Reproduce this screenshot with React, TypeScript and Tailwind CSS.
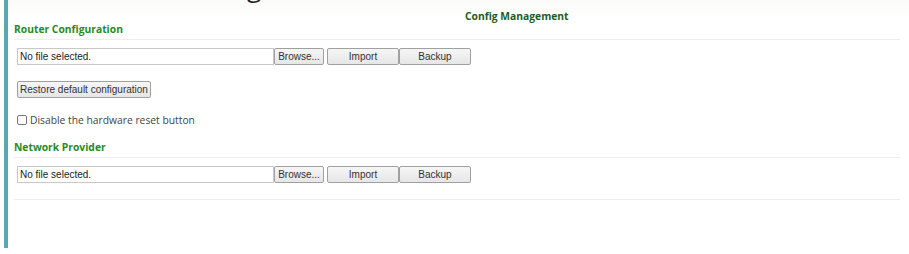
import React from "react";

const btn =
  "h-[17px] border border-[#a0a0a0] bg-gradient-to-b from-[#f6f6f6] to-[#e6e6e6] text-[10px] leading-none text-[#333] rounded-[2px] flex items-center justify-center";

function FileRow() {
  return (
    <div className="flex items-center h-[17px] ml-[3px]" style={{ fontFamily: "'Liberation Sans', Arial, sans-serif" }}>
      <div className="w-[257px] h-[17px] border border-[#c8c8c8] bg-white text-[10px] text-[#222] flex items-center pl-[2px]">
        No file selected.
      </div>
      <div className={btn + " w-[50px]"}>Browse...</div>
      <div className={btn + " w-[72px] ml-[3px]"}>Import</div>
      <div className={btn + " w-[72px]"}>Backup</div>
    </div>
  );
}

export default function App() {
  return (
    <div className="w-[909px] h-[254px] bg-white relative overflow-hidden" style={{ fontFamily: "'Open Sans', 'Noto Sans', sans-serif" }}>
      <div className="flex h-[248px]">
        <div className="w-[4px]" />
        <div className="w-[4px] bg-[#5aa7b4]" />
        <div className="flex-1 pl-[6px] pr-[9px] bg-gradient-to-b from-[#fbfcf9] to-white to-[20px]">
          <div className="h-[5px] overflow-hidden relative">
            <span className="absolute left-[233px] top-[-28px] text-[26px] leading-[30px] text-[#222]">g</span>
          </div>
          <div className="mt-[4px] text-[10.3px] font-bold text-[#1d5e1d] leading-[14px] pl-[451px]">Config Management</div>
          <div className="mt-[-1px] text-[10.3px] font-bold text-[#2a8a1f] leading-[14px]">Router Configuration</div>
          <div className="h-px bg-[#eeeeee] mt-[3px]" />
          <div className="mt-[8px]">
            <FileRow />
          </div>
          <div className="mt-[16px] ml-[3px]">
            <div
              className={btn + " w-[134px] h-[17px]"}
              style={{ fontFamily: "'Liberation Sans', Arial, sans-serif" }}
            >
              Restore default configuration
            </div>
          </div>
          <div className="mt-[15px] ml-[3px] flex items-center h-[14px]">
            <div className="w-[10px] h-[10px] border border-[#777] rounded-[2px] bg-white" />
            <span className="ml-[3px] text-[10.3px] text-[#444] leading-[14px]">Disable the hardware reset button</span>
          </div>
          <div className="mt-[13px] text-[10.3px] font-bold text-[#2a8a1f] leading-[14px]">Network Provider</div>
          <div className="h-px bg-[#eeeeee] mt-[3px]" />
          <div className="mt-[8px]">
            <FileRow />
          </div>
          <div className="h-px bg-[#eeeeee] mt-[16px]" />
        </div>
      </div>
    </div>
  );
}
